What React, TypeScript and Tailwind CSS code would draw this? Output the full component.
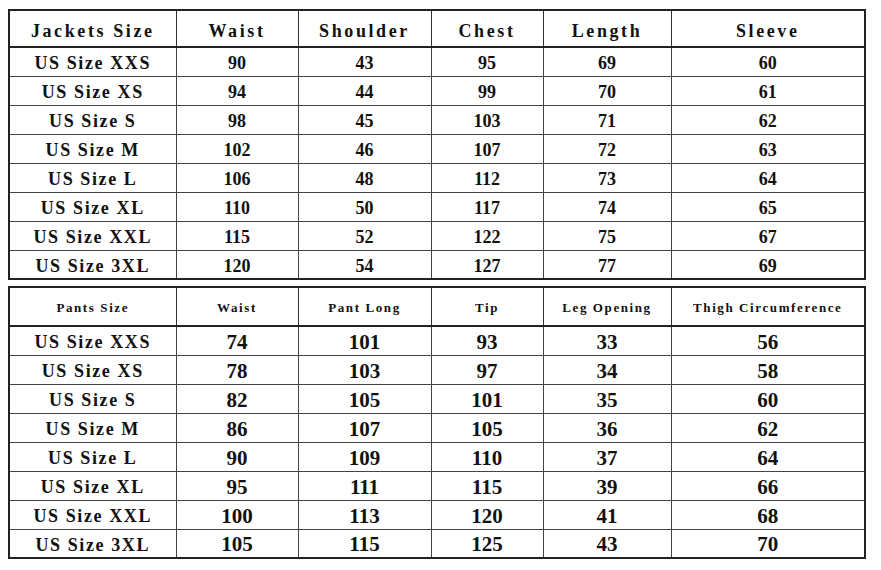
const jackets = [
  ['US Size XXS', '90', '43', '95', '69', '60'],
  ['US Size XS', '94', '44', '99', '70', '61'],
  ['US Size S', '98', '45', '103', '71', '62'],
  ['US Size M', '102', '46', '107', '72', '63'],
  ['US Size L', '106', '48', '112', '73', '64'],
  ['US Size XL', '110', '50', '117', '74', '65'],
  ['US Size XXL', '115', '52', '122', '75', '67'],
  ['US Size 3XL', '120', '54', '127', '77', '69'],
]

const pants = [
  ['US Size XXS', '74', '101', '93', '33', '56'],
  ['US Size XS', '78', '103', '97', '34', '58'],
  ['US Size S', '82', '105', '101', '35', '60'],
  ['US Size M', '86', '107', '105', '36', '62'],
  ['US Size L', '90', '109', '110', '37', '64'],
  ['US Size XL', '95', '111', '115', '39', '66'],
  ['US Size XXL', '100', '113', '120', '41', '68'],
  ['US Size 3XL', '105', '115', '125', '43', '70'],
]

const widths = ['w-[167px]', 'w-[122px]', 'w-[133px]', 'w-[112px]', 'w-[128px]', 'w-[194px]']

function SizeTable({
  head,
  rows,
  headH,
  rowH,
  headClass,
  numClass,
}: {
  head: string[]
  rows: string[][]
  headH: string
  rowH: string
  headClass: string
  numClass: string
}) {
  return (
    <table className="border-collapse border-2 border-[#222] table-fixed w-[856px]">
      <thead>
        <tr className={headH}>
          {head.map((h, i) => (
            <th
              key={i}
              className={`${widths[i]} border border-[#333] border-b-2 border-b-[#222] text-center align-middle font-bold text-[#111] font-['Liberation_Serif',serif] ${headClass}`}
            >
              {h}
            </th>
          ))}
        </tr>
      </thead>
      <tbody>
        {rows.map((r, ri) => (
          <tr key={ri} className={rowH}>
            {r.map((c, ci) => (
              <td
                key={ci}
                className={`border border-[#444] text-center align-middle text-[#111] leading-none pt-[3px] font-['Liberation_Serif',serif] font-bold ${
                  ci === 0 ? 'text-[18px] tracking-[1.6px]' : numClass
                }`}
              >
                {c}
              </td>
            ))}
          </tr>
        ))}
      </tbody>
    </table>
  )
}

export default function App() {
  return (
    <div className="w-[881px] h-[570px] bg-white pt-[9px] pl-[8px] flex flex-col gap-[6px]">
      <SizeTable
        head={['Jackets Size', 'Waist', 'Shoulder', 'Chest', 'Length', 'Sleeve']}
        rows={jackets}
        headH="h-[37px]"
        rowH="h-[29px]"
        headClass="text-[18px] tracking-[2.6px] pt-[5px]"
        numClass="text-[18px]"
      />
      <SizeTable
        head={['Pants Size', 'Waist', 'Pant Long', 'Tip', 'Leg Opening', 'Thigh Circumference']}
        rows={pants}
        headH="h-[39px]"
        rowH="h-[29px]"
        headClass="text-[13px] tracking-[1.6px] pt-[2px]"
        numClass="text-[21px]"
      />
    </div>
  )
}
